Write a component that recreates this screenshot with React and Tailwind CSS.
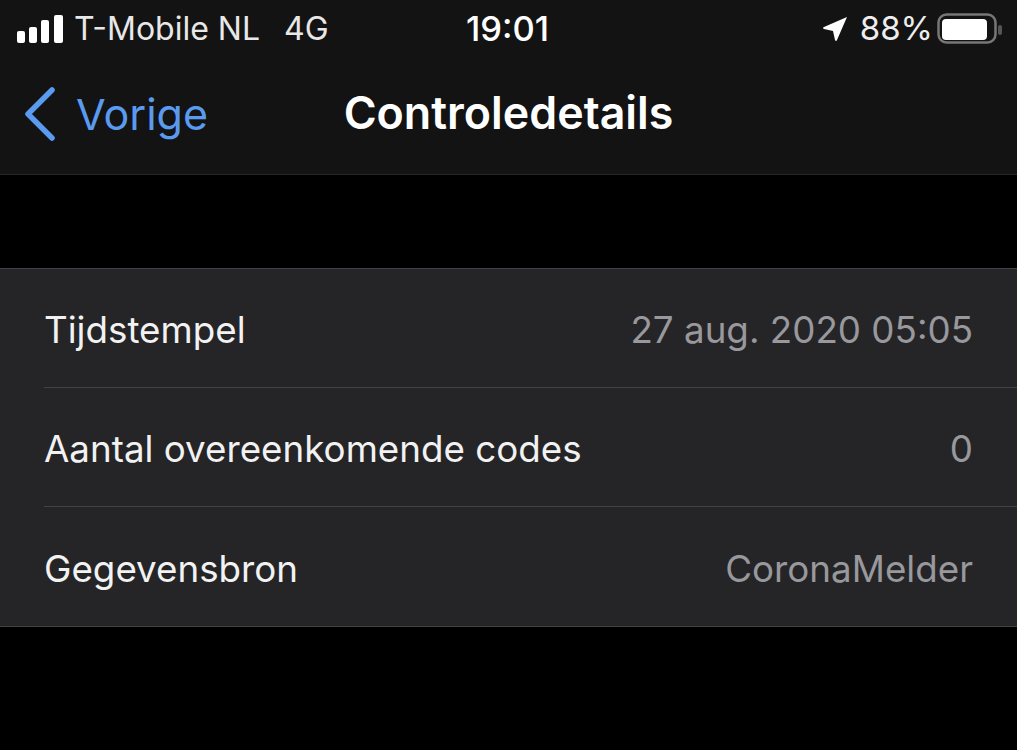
function StatusBar() {
  return (
    <div className="h-[56px] grid grid-cols-[1fr_auto_1fr] items-center pl-[17px] pr-[15px] pt-[1px] text-[32px] text-white">
      <div className="flex items-center">
        <svg width="46" height="28" viewBox="0 0 46 28" fill="#fff">
          <rect x="0" y="16" width="8" height="12" rx="2" />
          <rect x="12" y="12" width="8" height="16" rx="2" />
          <rect x="24" y="5" width="8" height="23" rx="2" />
          <rect x="37" y="0" width="9" height="28" rx="2" />
        </svg>
        <span className="ml-[11px] text-[#e8e8e8]">T-Mobile NL</span>
        <span className="ml-[24px] text-[#e8e8e8]">4G</span>
      </div>
      <span className="mr-[4px] text-[34.5px] font-medium">19:01</span>
      <div className="flex items-center justify-end">
        <svg width="26" height="26" viewBox="0 0 26 26" fill="#fff">
          <path d="M25 1 L15 24 Q14 26 13 24 L11 15 L2 13 Q0 12 2 11 Z" />
        </svg>
        <span className="ml-[12px] text-[33px] text-[#eeeeee]">88%</span>
        <svg className="ml-[4px]" width="65" height="32" viewBox="0 0 65 32">
          <rect x="1.5" y="1.5" width="57" height="28" rx="8" fill="none" stroke="#777" strokeWidth="2.5" />
          <rect x="5" y="6" width="45" height="21" rx="4" fill="#fff" />
          <rect x="61" y="12" width="4" height="10" rx="2" fill="#555" />
        </svg>
      </div>
    </div>
  );
}

function NavBar() {
  return (
    <div className="h-[119px] pb-[2px] grid grid-cols-[1fr_auto_1fr] items-center border-b border-[#272727]">
      <div className="flex items-center pl-[24px]">
        <svg width="32" height="54" viewBox="0 0 32 54" fill="none">
          <path d="M28 3 L4 27 L28 51" stroke="#5a9bf0" strokeWidth="5.5" strokeLinecap="round" strokeLinejoin="round" />
        </svg>
        <span className="ml-[20px] text-[43px] text-[#5a9bf0]">Vorige</span>
      </div>
      <span className="text-[44.75px] font-semibold text-white">Controledetails</span>
    </div>
  );
}

function Row({ label, value, last }) {
  return (
    <div className={`h-[119px] ml-[44px] pr-[44px] pt-[4px] flex items-center justify-between text-[36.75px] ${last ? "" : "border-b border-[#434347]"}`}>
      <span className="text-[#f2f2f2]">{label}</span>
      <span className="text-[#98989d]">{value}</span>
    </div>
  );
}

export default function App() {
  return (
    <div className="w-[1017px] h-[750px] bg-black overflow-hidden font-['Inter','Liberation_Sans',sans-serif]">
      <div className="bg-[#131313]">
        <StatusBar />
        <NavBar />
      </div>
      <div className="mt-[93px] bg-[#252527] border-y border-[#434347]">
        <Row label="Tijdstempel" value="27 aug. 2020 05:05" />
        <Row label="Aantal overeenkomende codes" value="0" />
        <Row label="Gegevensbron" value="CoronaMelder" last />
      </div>
    </div>
  );
}
